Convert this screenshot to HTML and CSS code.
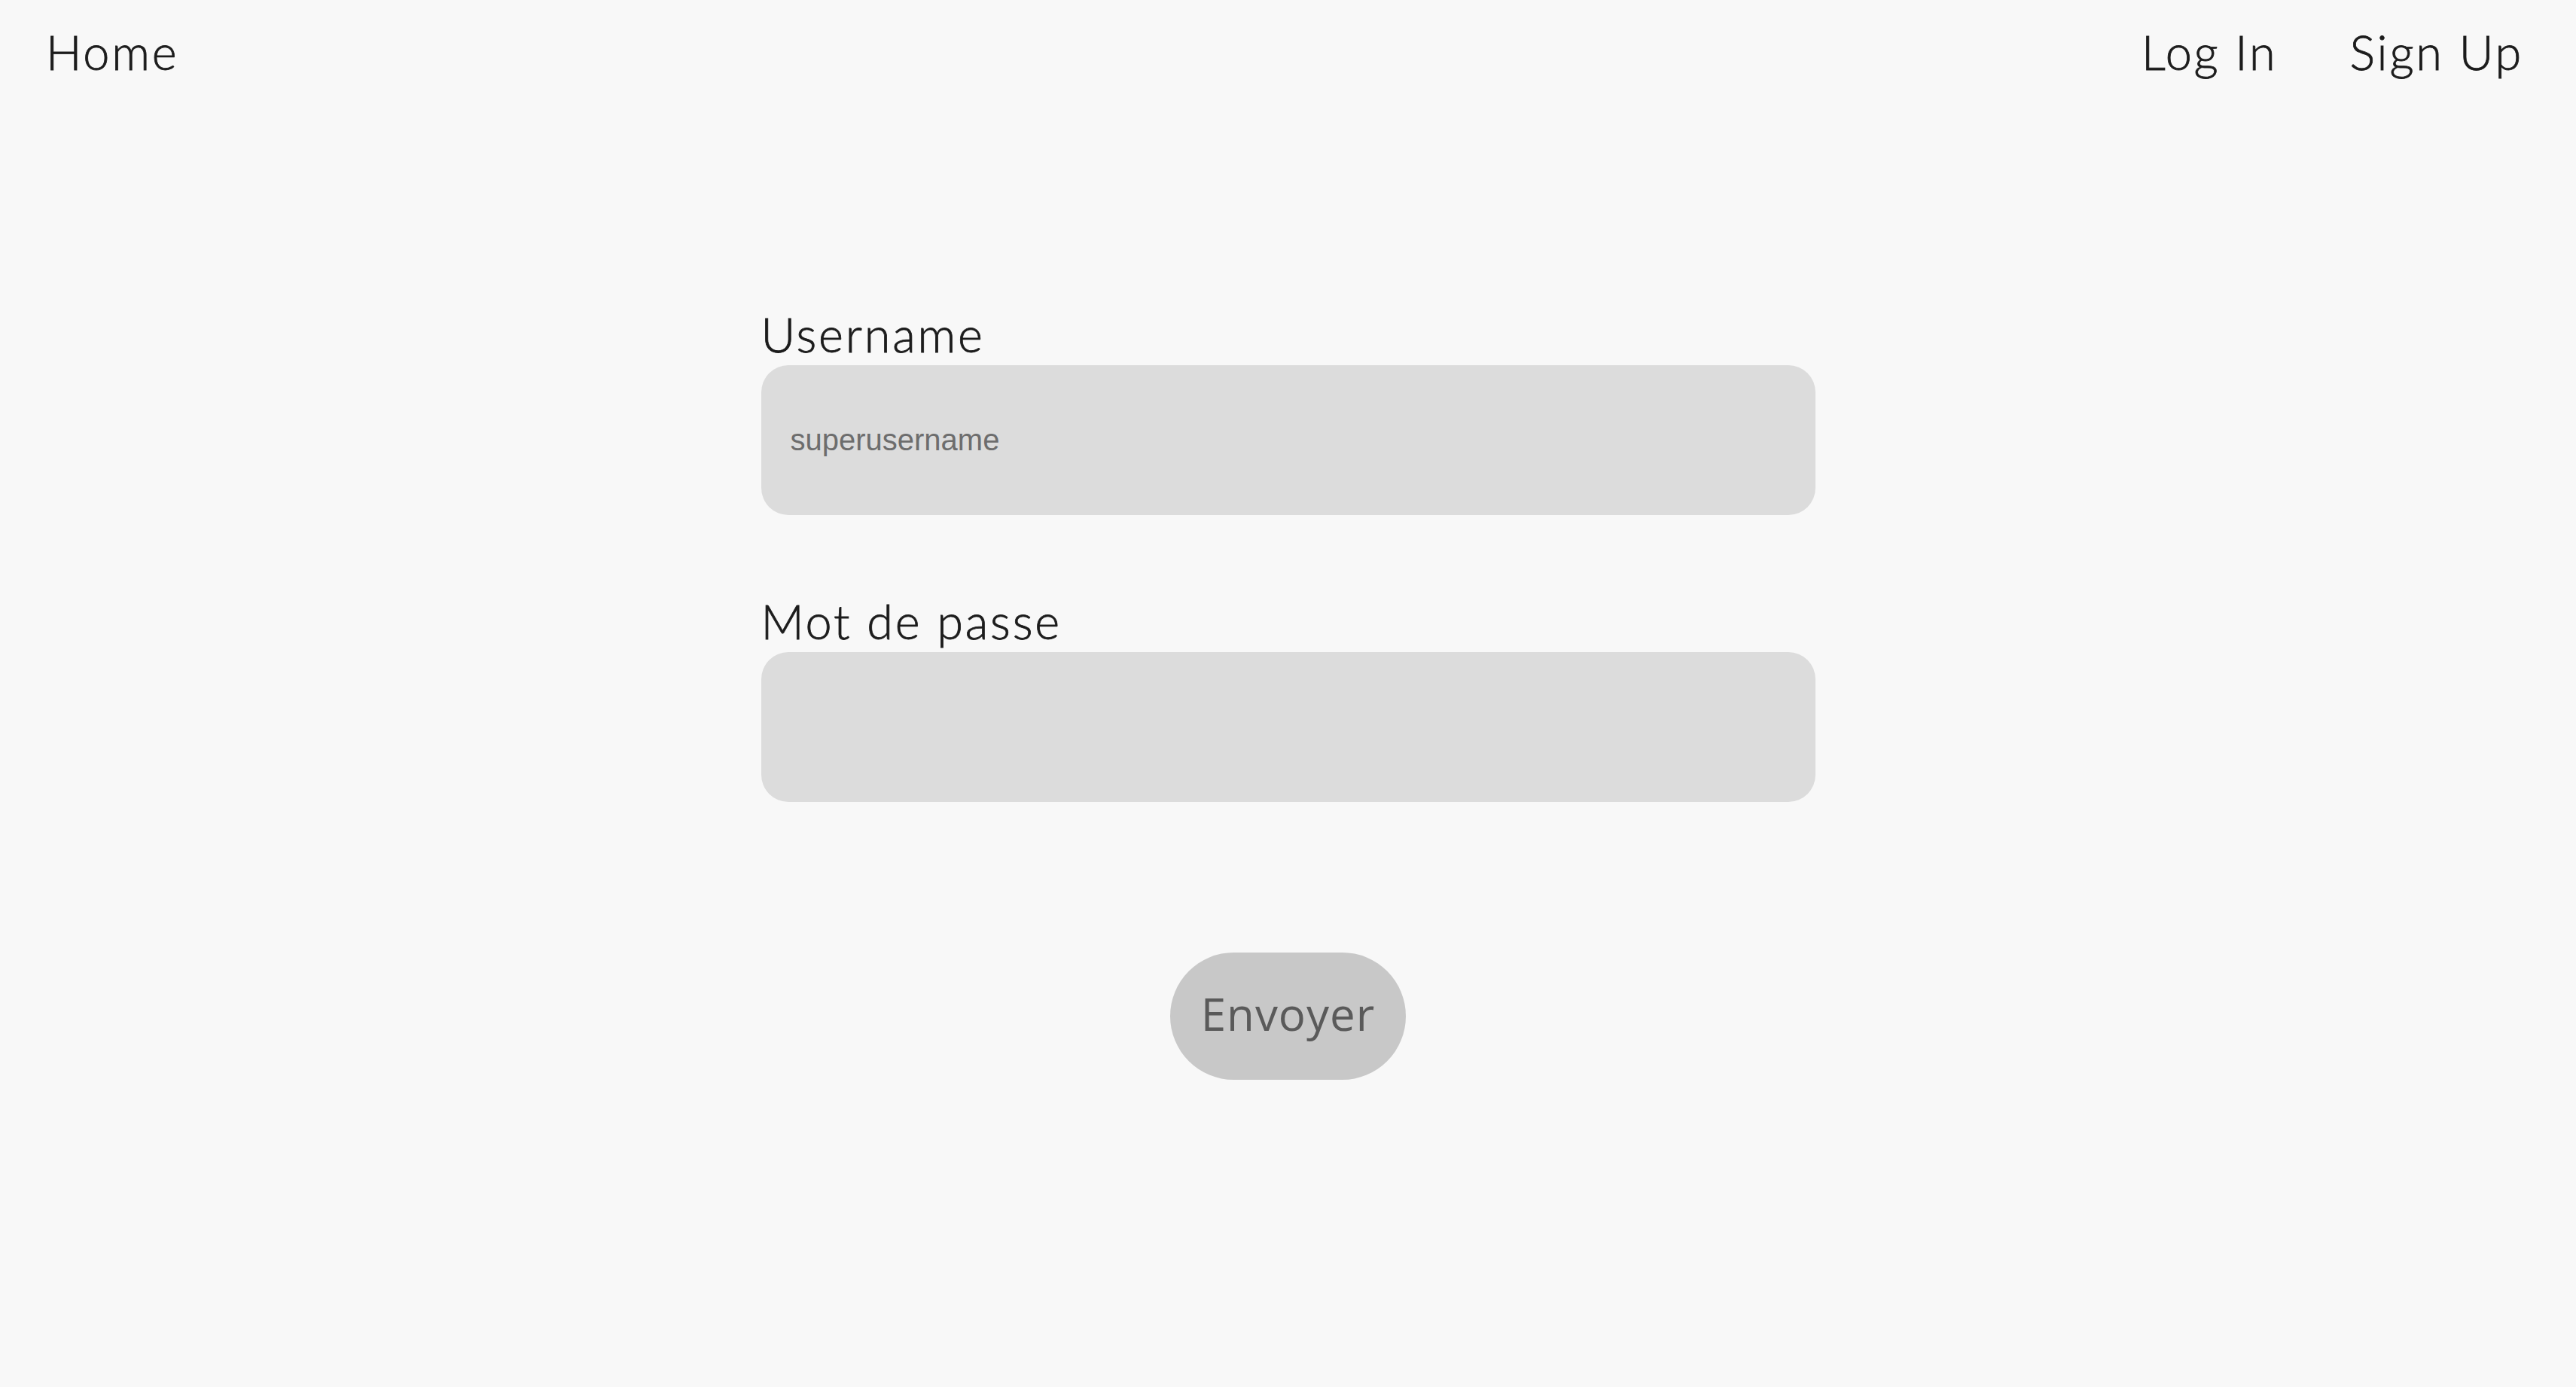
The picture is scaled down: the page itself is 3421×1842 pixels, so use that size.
FILE: index.html
```html
<!DOCTYPE html>
<html lang="fr">
<head>
<meta charset="utf-8">
<title>Log In</title>
<link rel="stylesheet" href="styles.css">
</head>
<body>
<nav class="nav">
  <a class="nav-link" href="#">Home</a>
  <div class="nav-right">
    <a class="nav-link" href="#">Log In</a>
    <a class="nav-link" href="#">Sign Up</a>
  </div>
</nav>
<main class="main">
  <form class="form">
    <label class="label" for="username">Username</label>
    <input class="field" id="username" type="text" placeholder="superusername">
    <label class="label label-second" for="password">Mot de passe</label>
    <input class="field" id="password" type="password">
    <div class="actions">
      <button class="submit" type="button">Envoyer</button>
    </div>
  </form>
</main>
</body>
</html>
```

FILE: styles.css
```css
html, body {
  margin: 0;
  padding: 0;
  background: #f8f8f8;
}

body {
  font-family: "Lato", "Noto Sans", sans-serif;
  color: #1c1c1c;
  min-height: 1842px;
}

.nav {
  display: flex;
  justify-content: space-between;
  align-items: flex-start;
  padding: 38px 70px 0 61px;
}

.nav-right {
  display: flex;
  gap: 96px;
}

.nav-link {
  font-size: 63px;
  line-height: 62px;
  font-weight: 300;
  color: #1c1c1c;
  text-decoration: none;
  letter-spacing: 2.8px;
  -webkit-text-stroke: 0.8px #1c1c1c;
}

.main {
  padding-top: 313px;
}

.form {
  width: 1400px;
  margin: 0 auto;
  display: flex;
  flex-direction: column;
}

.label {
  font-size: 63px;
  line-height: 62px;
  font-weight: 300;
  color: #1c1c1c;
  margin-bottom: 10px;
  letter-spacing: 2.8px;
  -webkit-text-stroke: 0.8px #1c1c1c;
}

.label-second {
  margin-top: 110px;
}

.field {
  box-sizing: border-box;
  width: 100%;
  height: 199px;
  border: none;
  border-radius: 36px;
  background: #dcdcdc;
  padding: 0 39px;
  font-family: "Liberation Sans", Arial, sans-serif;
  font-size: 40px;
  color: #333;
  outline: none;
}

.field::placeholder {
  color: #6d6d6d;
}

.actions {
  display: flex;
  justify-content: center;
  margin-top: 200px;
}

.submit {
  width: 313px;
  height: 169px;
  border: none;
  border-radius: 85px;
  background: #c8c8c8;
  font-family: "Open Sans", "Noto Sans", sans-serif;
  font-size: 60px;
  color: #5a5a5a;
  letter-spacing: 1px;
  padding: 0 0 8px;
}
```
